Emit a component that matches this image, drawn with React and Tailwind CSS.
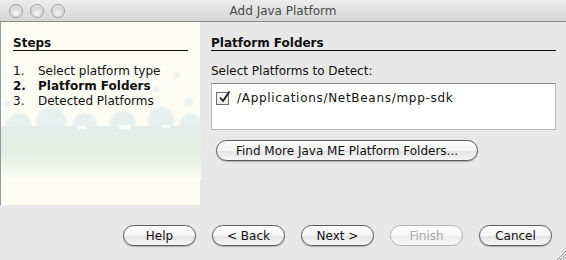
import React from "react";

const font = { fontFamily: '"DejaVu Sans", "Open Sans", sans-serif' };

function Light() {
  return (
    <div className="w-[14px] h-[14px] rounded-full border border-[#a0a0a0] bg-[radial-gradient(circle_at_50%_70%,#f6f6f6_0%,#d8d8d8_55%,#c0c0c0_100%)] shadow-[inset_0_1px_1px_rgba(255,255,255,0.8)]" />
  );
}

function Btn({ children, w = "w-[73px]", disabled = false }) {
  return (
    <div
      className={`${w} h-[21px] rounded-full flex items-center justify-center text-[12px] leading-none border ${
        disabled
          ? "border-[#b4b4b4] text-[#a8a8a8] bg-[linear-gradient(#ffffff,#f6f6f6_50%,#ececec_51%,#f8f8f8)]"
          : "border-[#5c5c5c] text-[#111] bg-[linear-gradient(#ffffff,#f4f4f4_50%,#e4e4e4_51%,#f6f6f6)] shadow-[0_1px_1px_rgba(0,0,0,0.25)]"
      }`}
    >
      {children}
    </div>
  );
}

function Splash() {
  return (
    <svg className="absolute inset-0" width="200" height="183" viewBox="0 0 200 183">
      <defs>
        <linearGradient id="fade" x1="0" y1="0" x2="0" y2="1">
          <stop offset="0" stopColor="#e3eeec" />
          <stop offset="0.5" stopColor="#e5eee4" />
          <stop offset="1" stopColor="#fdfdf4" />
        </linearGradient>
        <filter id="blur" x="-20%" y="-20%" width="140%" height="140%">
          <feGaussianBlur stdDeviation="1" />
        </filter>
      </defs>
      <g filter="url(#blur)" fill="#e6f0ee">
        <circle cx="18" cy="104" r="13" />
        <circle cx="50" cy="100" r="15" />
        <circle cx="84" cy="103" r="12" />
        <circle cx="122" cy="102" r="13" />
        <circle cx="160" cy="98" r="13" />
        <circle cx="190" cy="104" r="12" />
        <circle cx="155" cy="68" r="3" fill="#eaf1ec" />
        <circle cx="176" cy="53" r="3" fill="#eaf1ec" />
        <circle cx="188" cy="80" r="4" fill="#eaf1ec" />
        <circle cx="6" cy="82" r="3" fill="#eaf1ec" />
      </g>
      <rect x="0" y="104" width="200" height="54" fill="url(#fade)" />
      <g fill="#fdfdf4" opacity="0.9">
        <rect x="76" y="104" width="9" height="3" />
        <rect x="118" y="103" width="12" height="4" />
        <rect x="160" y="103" width="9" height="3" />
      </g>
    </svg>
  );
}

export default function App() {
  return (
    <div style={font} className="w-[566px] h-[260px] bg-[#e8e8e8] flex flex-col overflow-hidden relative text-[#111]">
      {/* title bar */}
      <div className="h-[22px] shrink-0 relative flex items-center border-b border-[#8c8c8c] bg-[linear-gradient(#ececec,#d6d6d6)]">
        <div className="flex gap-[7px] pl-[9px]">
          <Light />
          <Light />
          <Light />
        </div>
        <div className="absolute inset-0 flex items-center justify-center text-[12px] text-[#4a4a4a]">
          Add Java Platform
        </div>
      </div>

      <div className="flex h-[183px] shrink-0">
        {/* left panel */}
        <div className="w-[200px] h-full relative bg-[#fdfdf4] border-l border-[#8d9aa6]">
          <Splash />
          <div className="relative pl-[12px] pr-[12px] pt-[14px]">
            <div className="font-bold text-[12px] leading-[14px] border-b border-[#111]">Steps</div>
            <div className="mt-[13px] text-[12px] leading-[15px]">
              <div className="flex"><span className="w-[25px]">1.</span><span>Select platform type</span></div>
              <div className="flex font-bold"><span className="w-[25px]">2.</span><span>Platform Folders</span></div>
              <div className="flex"><span className="w-[25px]">3.</span><span>Detected Platforms</span></div>
            </div>
          </div>
        </div>

        {/* right pane */}
        <div className="flex-1 pl-[11px] pr-[10px] pt-[14px] text-[12px]">
          <div className="font-bold leading-[14px] border-b border-[#111]">Platform Folders</div>
          <div className="mt-[13px] leading-[15px]">Select Platforms to Detect:</div>
          <div className="mt-[4px] h-[47px] bg-white border border-[#b8b8b8] border-t-[#8e8e8e] pl-[4px] pt-[5px]">
            <div className="flex items-center gap-[8px]">
              <div className="w-[13px] h-[13px] border border-[#6e6e6e] bg-[linear-gradient(#ffffff,#e6e6e6)] relative">
                <svg className="absolute -top-[3px] left-[1px]" width="14" height="14" viewBox="0 0 14 14">
                  <path d="M2 7.5 L5 11 L11.5 1.5" fill="none" stroke="#1a1a1a" strokeWidth="1.8" strokeLinejoin="round" />
                </svg>
              </div>
              <span className="tracking-[0.7px]">/Applications/NetBeans/mpp-sdk</span>
            </div>
          </div>
          <div className="mt-[10px] ml-[5px]">
            <Btn w="w-[262px]">Find More Java ME Platform Folders...</Btn>
          </div>
        </div>
      </div>

      {/* buttons */}
      <div className="flex justify-end gap-[16px] pt-[20px] pr-[14px]">
        <Btn>Help</Btn>
        <Btn>&lt; Back</Btn>
        <Btn>Next &gt;</Btn>
        <Btn disabled>Finish</Btn>
        <Btn>Cancel</Btn>
      </div>

      {/* resize grip */}
      <svg className="absolute right-0 bottom-0" width="10" height="10" viewBox="0 0 10 10">
        <path d="M10 1 L1 10 M10 4 L4 10 M10 7 L7 10" stroke="#9a9a9a" strokeWidth="1" />
      </svg>
    </div>
  );
}
